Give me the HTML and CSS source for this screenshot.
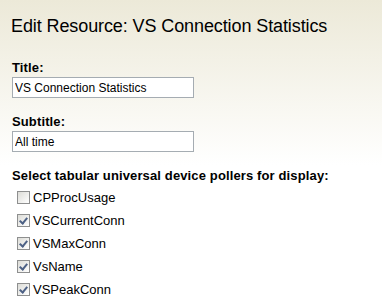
FILE: index.html
```html
<!DOCTYPE html>
<html>
<head lang="en">
    <meta charset="UTF-8">
    <title>Edit Resource</title>
    <link rel="stylesheet" href="styles.css">
</head>
<body>
<div id="page">
    <h1>Edit Resource: VS Connection Statistics</h1>
    <div class="field">
        <label>Title:</label>
        <input type="text" value="VS Connection Statistics"/>
    </div>
    <div class="field">
        <label>Subtitle:</label>
        <input type="text" value="All time"/>
    </div>
    <div class="field">
        <label>Select tabular universal device pollers for display:</label>
        <ul id="pollers">
            <li><span class="box"></span>CPProcUsage</li>
            <li><span class="box checked"></span>VSCurrentConn</li>
            <li><span class="box checked"></span>VSMaxConn</li>
            <li><span class="box checked"></span>VsName</li>
            <li><span class="box checked"></span>VSPeakConn</li>
        </ul>
    </div>
</div>
</body>
</html>
```
FILE: styles.css
```css
*{
    margin: 0;
    padding: 0;
}
ul{
    list-style: none;
}
html,body{
    height: 100%;
    overflow: hidden;
}
body{
    background: #fff linear-gradient(to bottom, #ece9d8 0, #ffffff 165px) no-repeat;
    font-family: "Liberation Sans", Arial, sans-serif;
    color: #000;
}
#page{
    padding: 15px 12px 0 12px;
    display: flex;
    flex-direction: column;
}
h1{
    font-size: 18px;
    font-weight: normal;
    line-height: 22px;
    letter-spacing: -0.1px;
    margin: 0 0 23px -1px;
}
.field{
    display: flex;
    flex-direction: column;
    margin-bottom: 16px;
}
.field label{
    font-size: 13px;
    font-weight: bold;
    line-height: 15px;
    letter-spacing: 0.13px;
    margin-bottom: 2px;
}
.field input{
    width: 182px;
    height: 21px;
    box-sizing: border-box;
    border: 1px solid #a5acb2;
    background: #fff;
    font-family: "Liberation Sans", Arial, sans-serif;
    font-size: 12px;
    padding: 0 2px;
    outline: none;
}
#pollers{
    margin-top: 1px;
}
#pollers li{
    display: flex;
    align-items: center;
    height: 23px;
    font-size: 13px;
    padding-left: 5px;
}
.box{
    width: 11px;
    height: 11px;
    border: 1px solid #8e8f8f;
    background: linear-gradient(135deg, #dcdcd7, #ffffff);
    margin-right: 3px;
    position: relative;
}
.checked::after{
    content: "";
    position: absolute;
    left: 3px;
    top: 1px;
    width: 3px;
    height: 6px;
    border: solid #4d6185;
    border-width: 0 2px 2px 0;
    transform: rotate(40deg);
}
```
